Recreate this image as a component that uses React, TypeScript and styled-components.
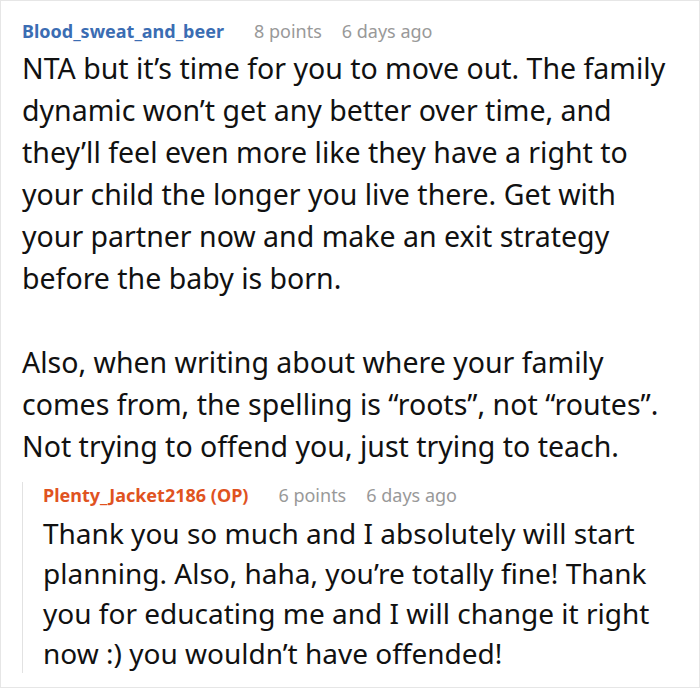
import React from 'react';
import styled, { createGlobalStyle } from 'styled-components';

const GlobalStyle = createGlobalStyle`
  html, body {
    margin: 0;
    padding: 0;
    background: #fff;
  }
  body {
    font-family: "Noto Sans", "Open Sans", sans-serif;
  }
`;

const Frame = styled.div`
  box-sizing: border-box;
  width: 700px;
  height: 688px;
  border: 1px solid #e6e6e6;
  padding: 17px 19px 0 21px;
  overflow: hidden;
`;

const Comment = styled.div`
  display: flex;
  flex-direction: column;
`;

const Meta = styled.div`
  display: flex;
  align-items: baseline;
  gap: 20px;
  font-size: 18px;
  line-height: 26px;
  margin-bottom: 3px;
`;

const Author = styled.span<{ $color: string }>`
  font-weight: 700;
  color: ${(p) => p.$color};
  margin-right: 10px;
`;

const Info = styled.span`
  color: #999;
`;

const Body = styled.div`
  font-size: 28.5px;
  line-height: 42px;
  color: #111;

  p {
    margin: 0;
  }
  p + p {
    margin-top: 42px;
  }
`;

const Reply = styled.div`
  margin-top: 15px;
  border-left: 1px solid #e2e2e2;
  padding-left: 20px;
`;

const ReplyBody = styled(Body)`
  font-size: 28px;
  line-height: 40px;
  margin-top: 5px;
`;

export default function App() {
  return (
    <>
      <GlobalStyle />
      <Frame>
        <Comment>
          <Meta>
            <Author $color="#3b6db3">Blood_sweat_and_beer</Author>
            <Info>8 points</Info>
            <Info>6 days ago</Info>
          </Meta>
          <Body>
            <p>
              NTA but it’s time for you to move out. The family dynamic won’t get any
              better over time, and they’ll feel even more like they have a right to
              your child the longer you live there. Get with your partner now and make
              an exit strategy before the baby is born.
            </p>
            <p>
              Also, when writing about where your family comes from, the spelling is
              “roots”, not “routes”. Not trying to offend you, just trying to teach.
            </p>
          </Body>
          <Reply>
            <Meta>
              <Author $color="#e0531f">Plenty_Jacket2186 (OP)</Author>
              <Info>6 points</Info>
              <Info>6 days ago</Info>
            </Meta>
            <ReplyBody>
              <p>
                Thank you so much and I absolutely will start planning. Also, haha,
                you’re totally fine! Thank you for educating me and I will change it
                right now :) you wouldn’t have offended!
              </p>
            </ReplyBody>
          </Reply>
        </Comment>
      </Frame>
    </>
  );
}
